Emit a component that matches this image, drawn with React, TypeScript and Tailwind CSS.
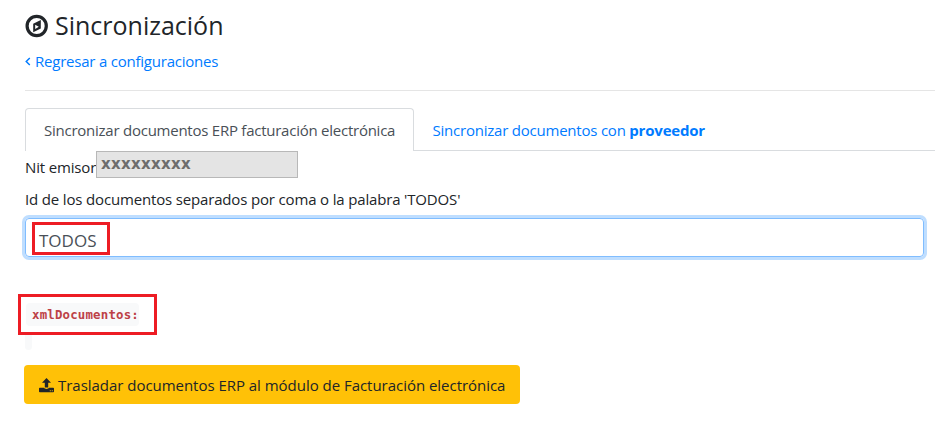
function CompassIcon() {
  return (
    <svg viewBox="0 0 24 24" className="mt-px h-6 w-6 shrink-0 fill-none">
      <circle cx="11.7" cy="12" r="9.6" stroke="#212529" strokeWidth="3.2" />
      <path d="M15.8 6v8.4l-7.6 3.8V9.8z" fill="#212529" />
      <path d="M10.2 10.7l3.6 2-3.6 2.3z" fill="#fff" />
    </svg>
  );
}

function UploadIcon() {
  return (
    <svg viewBox="0 0 15 15" className="mt-px h-[15px] w-[15px] shrink-0" fill="#212529">
      <path d="M7.5 0 12 4.8H9.2V9.4H5.8V4.8H3z" />
      <path
        fillRule="evenodd"
        d="M.8 9.8h4.1a2.7 1.5 0 0 0 5.2 0h4.1q.8 0 .8.8v2.9q0 .8-.8.8H.8q-.8 0-.8-.8v-2.9q0-.8.8-.8zM10.8 12.3h1v1h-1zM12.8 12.3h1v1h-1z"
      />
    </svg>
  );
}

export default function App() {
  return (
    <main className="h-[429px] w-[946px] overflow-hidden bg-white pl-[25px] font-['Open_Sans','Noto_Sans',sans-serif] text-[15px] whitespace-nowrap text-[#212529]">
      <header className="h-[90px] pt-[8px]">
        <h1 className="flex h-[34px] items-center gap-[6px] text-[25px] leading-[34px]">
          <CompassIcon />
          <span>Sincronización</span>
        </h1>
        <a className="mt-[7px] flex h-6 items-center gap-[4px] leading-6 tracking-[-0.22px] text-[#007bff]">
          <svg viewBox="0 0 6 10" className="h-[9px] w-[6px] fill-none stroke-current stroke-[1.6]">
            <path d="M5 1 1 5l4 4" />
          </svg>
          <span>Regresar a configuraciones</span>
        </a>
      </header>
      <hr className="w-[910px] border-t border-[#e5e5e5]" />
      <nav className="mt-[17px] flex h-[43px] w-[910px]">
        <a className="h-[43px] w-[389px] rounded-t-[4px] border border-b-0 border-[#d9dcdf] pt-[9px] pl-[18px] leading-6 tracking-[-0.245px] text-[#495057]">
          <span>Sincronizar documentos ERP facturación electrónica</span>
        </a>
        <a className="h-[43px] flex-1 border-b border-[#d9dcdf] pt-[10px] pl-[18.5px] leading-6 tracking-[-0.22px] text-[#007bff]">
          <span>Sincronizar documentos con </span>
          <b className="tracking-[-0.2px]">proveedor</b>
        </a>
      </nav>
      <div className="flex h-[27px]">
        <label className="w-[71px] pt-[4px] leading-6 tracking-[-0.16px]">Nit emisor</label>
        <div className="h-[27px] w-[202px] border border-[#b8b8b8] bg-[#e4e4e4] pl-[4px] font-['DejaVu_Sans',sans-serif] text-[15px] leading-6 font-bold tracking-[0.33px] text-[#6d6d6d]">
          <span>xxxxxxxxx</span>
        </div>
      </div>
      <label className="mt-[9px] block h-[24px] leading-6 tracking-[-0.16px]">
        <span>Id de los documentos separados por coma o la palabra 'TODOS'</span>
      </label>
      <div className="mt-[7px] h-[39px] w-[899px] rounded-[4px] border border-[#80bdff] pt-[3px] pl-[6px] shadow-[0_0_0_3px_#bfdeff]">
        <div className="h-[33px] w-[78px] border-[3px] border-[#ed1c24] pl-[4px] text-[17px] leading-[31px] text-[#495057]">
          <span>TODOS</span>
        </div>
      </div>
      <div className="-ml-[7px] mt-[37px] h-[41px] w-[139px] border-[3px] border-[#ed1c24] pt-[6px] pl-[5px]">
        <code className="block h-[23px] w-[113px] rounded-[4px] bg-[#f8f9fa] pl-[6px] font-['DejaVu_Sans_Mono',monospace] text-[12.4px] leading-[23px] font-bold tracking-[0.18px] text-[#bd4147]">
          xmlDocumentos:
        </code>
      </div>
      <div className="h-[15px] w-[7px] rounded-b-[4px] bg-[#f8f9fa]" />
      <button className="-ml-px mt-[15px] flex h-[39px] w-[496px] items-center gap-[4px] rounded-[4px] bg-[#ffc107] pl-[15px] leading-6 tracking-[-0.03px]">
        <UploadIcon />
        <span>Trasladar documentos ERP al módulo de Facturación electrónica</span>
      </button>
    </main>
  );
}
